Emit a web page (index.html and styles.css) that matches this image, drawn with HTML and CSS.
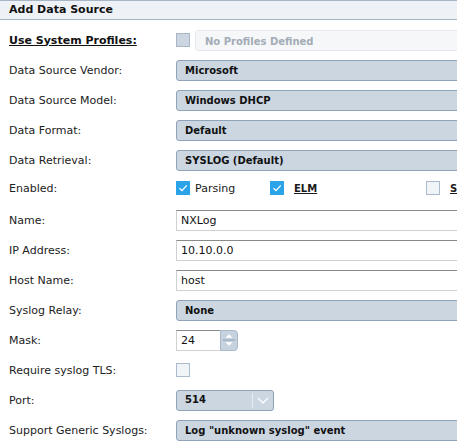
FILE: index.html
```html
<!DOCTYPE html>
<html>
<head>
<meta charset="utf-8">
<link rel="stylesheet" href="styles.css">
</head>
<body>
<div class="panel">
  <div class="header">Add Data Source</div>
  <div class="form">
    <div class="row">
      <div class="label strong">Use System Profiles:</div>
      <div class="ctrl">
        <span class="cb cb-disabled"></span>
        <div class="profiles">No Profiles Defined</div>
      </div>
    </div>
    <div class="row">
      <div class="label">Data Source Vendor:</div>
      <div class="ctrl"><div class="select">Microsoft</div></div>
    </div>
    <div class="row">
      <div class="label">Data Source Model:</div>
      <div class="ctrl"><div class="select">Windows DHCP</div></div>
    </div>
    <div class="row">
      <div class="label">Data Format:</div>
      <div class="ctrl"><div class="select">Default</div></div>
    </div>
    <div class="row">
      <div class="label">Data Retrieval:</div>
      <div class="ctrl"><div class="select">SYSLOG (Default)</div></div>
    </div>
    <div class="row">
      <div class="label up">Enabled:</div>
      <div class="ctrl">
        <span class="opt opt1"><span class="cb cb-checked"><svg viewBox="0 0 14 14" width="14" height="14"><path d="M3.5 7.2 L6 9.6 L10.8 4.4" fill="none" stroke="#fff" stroke-width="1.3"/></svg></span><span class="optlabel">Parsing</span></span>
        <span class="opt opt2"><span class="cb cb-checked"><svg viewBox="0 0 14 14" width="14" height="14"><path d="M3.5 7.2 L6 9.6 L10.8 4.4" fill="none" stroke="#fff" stroke-width="1.3"/></svg></span><span class="optlabel link">ELM</span></span>
        <span class="opt opt3"><span class="cb cb-empty"></span><span class="optlabel link">SIEM</span></span>
      </div>
    </div>
    <div class="row">
      <div class="label">Name:</div>
      <div class="ctrl"><div class="text">NXLog</div></div>
    </div>
    <div class="row">
      <div class="label">IP Address:</div>
      <div class="ctrl"><div class="text">10.10.0.0</div></div>
    </div>
    <div class="row">
      <div class="label">Host Name:</div>
      <div class="ctrl"><div class="text">host</div></div>
    </div>
    <div class="row">
      <div class="label">Syslog Relay:</div>
      <div class="ctrl"><div class="select">None</div></div>
    </div>
    <div class="row">
      <div class="label">Mask:</div>
      <div class="ctrl">
        <div class="spin">
          <div class="spin-input">24</div>
          <div class="spin-btn">
            <svg viewBox="0 0 18 20" width="18" height="20">
              <path d="M5 7.5 L9 3.5 L13 7.5 Z" fill="#ffffff"/>
              <rect x="2" y="9.5" width="14" height="1.2" fill="#8ea3ba"/>
              <path d="M5 12.5 L9 16.5 L13 12.5 Z" fill="#ffffff"/>
            </svg>
          </div>
        </div>
      </div>
    </div>
    <div class="row">
      <div class="label">Require syslog TLS:</div>
      <div class="ctrl"><span class="cb cb-empty"></span></div>
    </div>
    <div class="row">
      <div class="label">Port:</div>
      <div class="ctrl">
        <div class="select port">
          <span class="port-val">514</span>
          <span class="port-arrow"><svg viewBox="0 0 20 20" width="20" height="20"><path d="M5 8 L10 13 L15 8" fill="none" stroke="#ffffff" stroke-width="1.3"/></svg></span>
        </div>
      </div>
    </div>
    <div class="row">
      <div class="label">Support Generic Syslogs:</div>
      <div class="ctrl"><div class="select">Log "unknown syslog" event</div></div>
    </div>
  </div>
</div>
</body>
</html>
```

FILE: styles.css
```css
html, body {
  margin: 0;
  padding: 0;
  background: #ffffff;
  overflow: hidden;
}
body {
  width: 457px;
  height: 446px;
  font-family: "DejaVu Sans", Verdana, sans-serif;
  font-size: 11px;
  color: #1a1a1a;
}
.panel {
  width: 457px;
  overflow: hidden;
}
.header {
  height: 18px;
  line-height: 18px;
  border-top: 1px solid #a7b6c6;
  border-bottom: 1px solid #a7b6c6;
  background: #eef2f6;
  padding-left: 9px;
  font-weight: bold;
  font-size: 11px;
  color: #111;
}
.form {
  padding-top: 5px;
}
.row {
  display: flex;
  align-items: center;
  height: 30px;
}
.label {
  width: 167px;
  padding-left: 9px;
  flex: none;
  color: #222;
  white-space: nowrap;
}
.label.up {
  position: relative;
  top: -2px;
}
.label.strong {
  font-weight: bold;
  text-decoration: underline;
  color: #111;
}
.ctrl {
  flex: 1;
  display: flex;
  align-items: center;
  min-width: 0;
  white-space: nowrap;
  overflow: hidden;
  height: 24px;
}
.cb {
  width: 14px;
  height: 14px;
  box-sizing: border-box;
  display: inline-block;
  flex: none;
}
.cb-disabled {
  background: #ccd6e1;
  border: 1px solid #a6b7c9;
}
.cb-empty {
  background: #f1f4f7;
  border: 1px solid #a9bbcd;
}
.cb-checked {
  background: #2aa3e8;
}
.cb-checked svg {
  display: block;
}
.profiles {
  margin-left: 5px;
  width: 300px;
  height: 21px;
  line-height: 21px;
  box-sizing: border-box;
  background: #f5f7f9;
  border: 1px solid #e5e9ed;
  border-radius: 3px;
  padding-left: 9px;
  font-family: Tahoma, "DejaVu Sans", sans-serif;
  font-weight: bold;
  font-size: 10px;
  color: #a3acb6;
  flex: none;
}
.select {
  width: 300px;
  height: 21px;
  line-height: 19px;
  box-sizing: border-box;
  background: #cbd6e1;
  border: 1px solid #8fa3b9;
  border-radius: 3px;
  padding-left: 8px;
  font-family: Tahoma, "DejaVu Sans", sans-serif;
  font-weight: bold;
  font-size: 10px;
  color: #111;
  flex: none;
}
.select.port {
  width: 98px;
  display: flex;
  align-items: center;
  padding-left: 0;
}
.port-val {
  width: 76px;
  padding-left: 8px;
  box-sizing: border-box;
  border-right: 1px solid #e6ecf2;
  height: 15px;
  line-height: 14px;
}
.port-arrow {
  flex: 1;
  display: flex;
  justify-content: center;
}
.port-arrow svg {
  display: block;
}
.text {
  width: 300px;
  height: 21px;
  line-height: 19px;
  box-sizing: border-box;
  background: #ffffff;
  border: 1px solid #d0d0d0;
  border-top-color: #8a8a8a;
  padding-left: 4px;
  color: #111;
  flex: none;
}
.opt {
  display: inline-flex;
  align-items: center;
  position: relative;
  top: -2px;
  flex: none;
}
.opt1 {
  width: 94px;
}
.opt2 {
  width: 156px;
}
.optlabel {
  margin-left: 5px;
}
.opt2 .optlabel, .opt3 .optlabel {
  margin-left: 10px;
}
.link {
  font-weight: bold;
  text-decoration: underline;
  font-family: Tahoma, "DejaVu Sans", sans-serif;
  font-size: 10px;
}
.spin {
  display: flex;
  height: 21px;
}
.spin-input {
  width: 44px;
  height: 21px;
  box-sizing: border-box;
  border: 1px solid #d0d0d0;
  border-top-color: #8a8a8a;
  border-right: none;
  line-height: 19px;
  padding-left: 4px;
  color: #111;
}
.spin-btn {
  width: 18px;
  height: 21px;
  box-sizing: border-box;
  background: #c6d3df;
  border: 1px solid #a9b9ca;
  border-radius: 0 4px 4px 0;
  display: flex;
  align-items: center;
  justify-content: center;
}
.spin-btn svg {
  display: block;
}
```
